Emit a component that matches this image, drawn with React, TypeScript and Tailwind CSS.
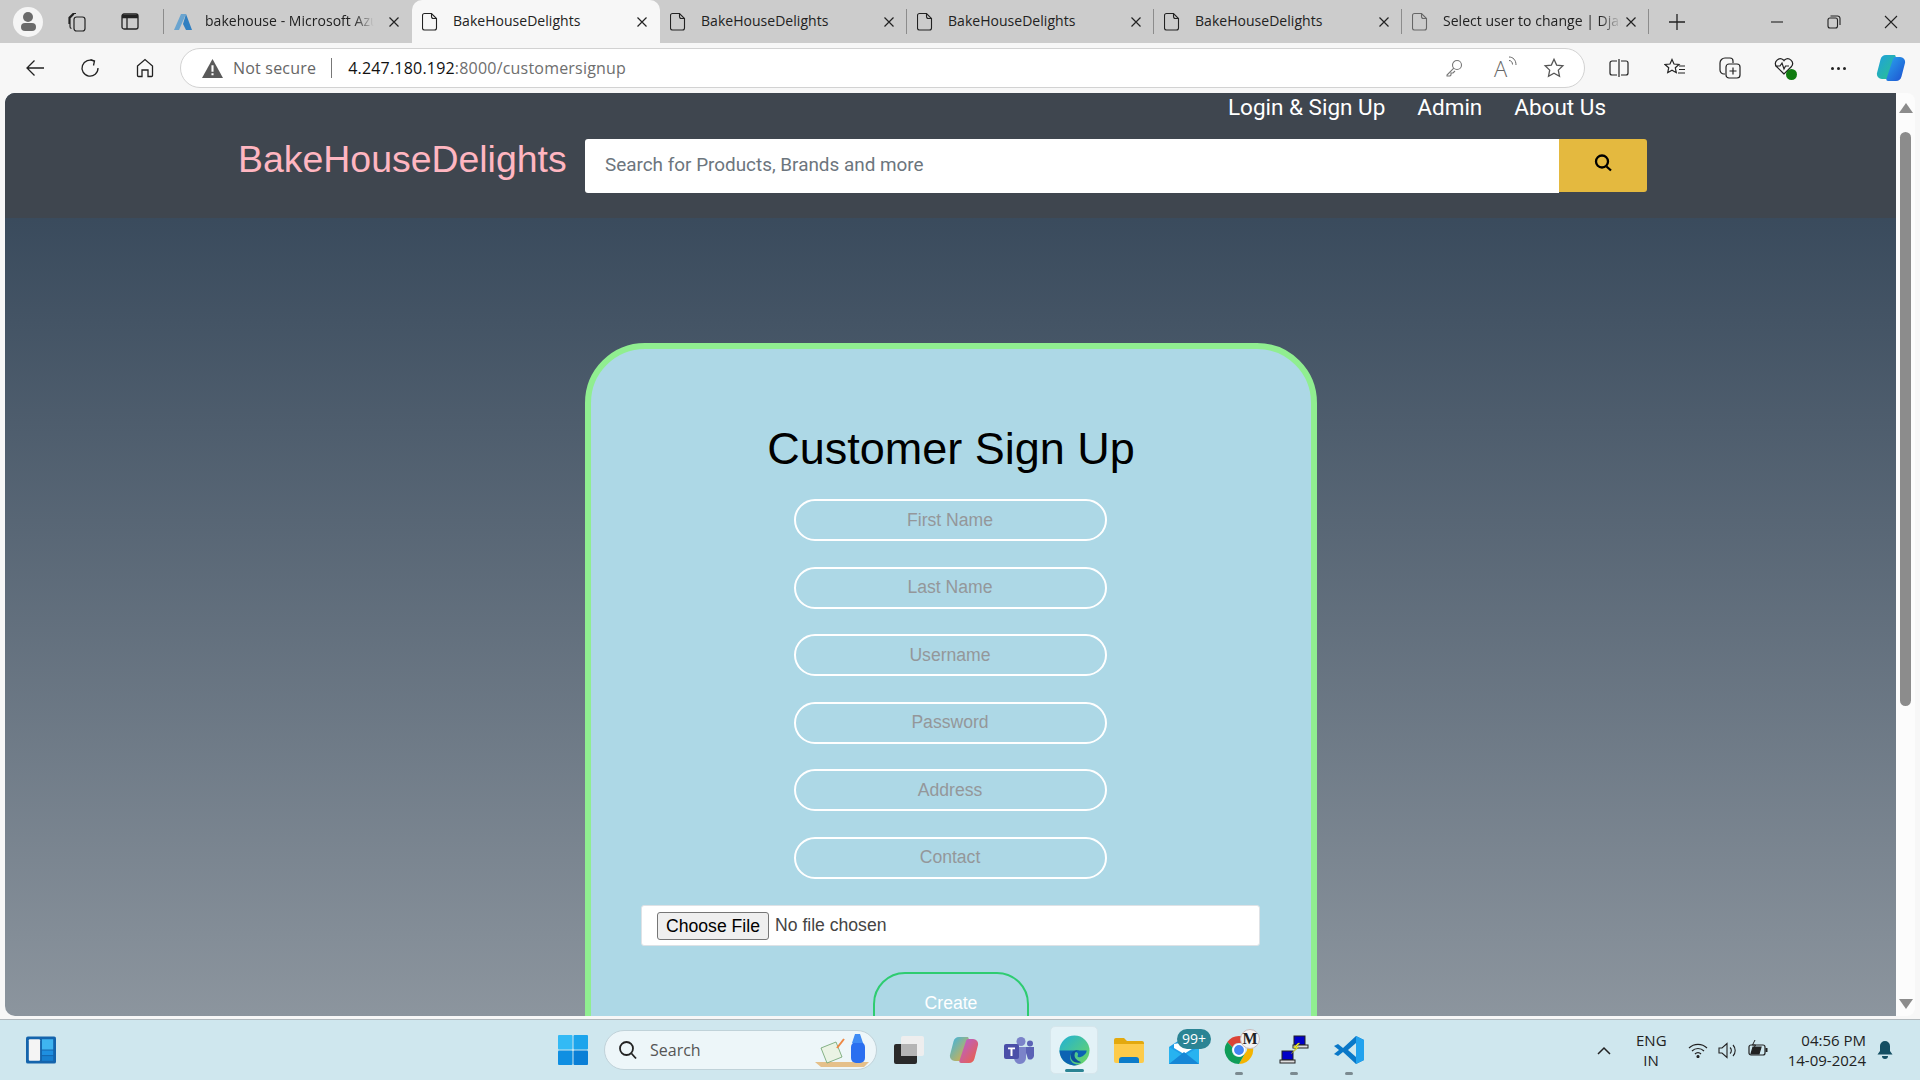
import React from "react";

const TabX = ({ cls }: { cls: string }) => (
  <svg width="12" height="12" viewBox="0 0 12 12" className={cls} stroke="#222" strokeWidth="1.2"><path d="M1.500 1.500l9 9M10.500 1.500l-9 9" /></svg>
);

const Tab = ({ title, w, active, faded, sep }: { title: string; w: string; active?: boolean; faded?: boolean; sep?: boolean }) => (
  <div className={`${w} relative flex items-center h-[43px] shrink-0 ${active ? "bg-[#f7f7f7] rounded-t-[10px]" : ""}`}>
    <svg width="16" height="20" viewBox="0 0 16 20" className="ml-[10px] shrink-0" fill="none" stroke={faded ? "#666" : "#222"} strokeWidth="1.1">
      <path d="M2.500 1.500h7l5 5V16a2 2 0 0 1-2 2h-10a2 2 0 0 1-2-2V3.500a2 2 0 0 1 2-2z" />
      <path d="M9.500 1.500v3a2 2 0 0 0 2 2h3" />
    </svg>
    <span className={`ml-[15px] pb-[2px] text-[14px] text-[#222] whitespace-nowrap overflow-hidden flex-1 font-['Open_Sans',sans-serif] tracking-[0.03px] ${faded ? "[mask-image:linear-gradient(to_right,black_88%,transparent)]" : ""}`}>{title}</span>
    <TabX cls="mr-[12px] ml-1 shrink-0" />
    {sep && <div className="absolute right-0 top-[9px] h-[25px] w-px bg-[#8c8c8c]" />}
  </div>
);

const Field = ({ placeholder }: { placeholder: string }) => (
  <input
    placeholder={placeholder}
    className="block w-[313px] h-[42px] shrink-0 rounded-[21px] border-2 border-white bg-transparent text-center text-[17.600px] font-['Liberation_Sans',sans-serif] placeholder:text-[#94979a] outline-none"
  />
);

const Dot = () => <div className="absolute left-[11px] bottom-[-10px] w-[8px] h-[3px] rounded-[2px] bg-[#7b8a90]" />;

export default function App() {
  return (
    <div className="w-[1920px] h-[1080px] overflow-hidden flex flex-col bg-[#f7f7f7] font-['Liberation_Sans',sans-serif]">
      {/* tab strip */}
      <div className="h-[43px] shrink-0 bg-[#cccccc] flex items-center">
        <div className="w-[164px] shrink-0 flex items-center relative h-full">
          <div className="ml-[13px] w-[30px] h-[30px] rounded-full bg-[#f5f5f5] flex flex-col items-center justify-center gap-[1px]">
            <div className="w-[10px] h-[10px] rounded-full bg-[#6b6b6b]" />
            <div className="w-[15px] h-[8px] rounded-[4px] bg-[#6b6b6b]" />
          </div>
          <svg width="22" height="22" viewBox="0 0 22 22" className="ml-[23px]" fill="none" stroke="#222" strokeWidth="1.2">
            <rect x="8" y="6" width="11" height="14" rx="2.500" />
            <path d="M5.500 17.500A2 2 0 0 1 4 15.500V7l4-4M3 13V6.500L7 2.500h3" />
          </svg>
          <svg width="18" height="17" viewBox="0 0 18 17" className="ml-[33px]" fill="none" stroke="#222" strokeWidth="1.3">
            <rect x="1" y="1" width="16" height="15" rx="2" />
            <path d="M1 3.500h16" strokeWidth="3.500" />
            <path d="M6 5v11" />
          </svg>
          <div className="absolute right-0 top-[9px] h-[25px] w-px bg-[#8c8c8c]" />
        </div>
        <div className="w-[248px] shrink-0 flex items-center h-full">
          <svg width="18" height="18" viewBox="0 0 18 18" className="ml-[10px] shrink-0">
            <path d="M7 1h5l-7 16H0z" fill="#6aa4cf" />
            <path d="M12 1l6 16h-6l-3-6z" fill="#2f7fc1" />
          </svg>
          <span className="ml-[13px] pb-[2px] text-[14px] text-[#222] whitespace-nowrap overflow-hidden flex-1 font-['Open_Sans',sans-serif] tracking-[0.03px] [mask-image:linear-gradient(to_right,black_88%,transparent)]">bakehouse - Microsoft Azure</span>
          <TabX cls="mr-[12px] ml-[14px] shrink-0" />
        </div>
        <Tab title="BakeHouseDelights" w="w-[248px]" active />
        <Tab title="BakeHouseDelights" w="w-[247px]" sep />
        <Tab title="BakeHouseDelights" w="w-[247px]" sep />
        <Tab title="BakeHouseDelights" w="w-[248px]" sep />
        <Tab title="Select user to change | Django" w="w-[247px]" faded sep />
        <svg width="18" height="18" viewBox="0 0 18 18" className="ml-[19px]" stroke="#222" strokeWidth="1.3"><path d="M9 1v16M1 9h16" /></svg>
        <div className="ml-auto flex items-center">
          <svg width="14" height="14" viewBox="0 0 14 14" stroke="#222" strokeWidth="1.1"><path d="M1 7h12" /></svg>
          <svg width="14" height="14" viewBox="0 0 14 14" className="ml-[43px]" fill="none" stroke="#222" strokeWidth="1.1"><rect x="1" y="3" width="9.500" height="10" rx="2" /><path d="M3.500 1h7a2.500 2.500 0 0 1 2.500 2.500V10" /></svg>
          <svg width="14" height="14" viewBox="0 0 14 14" className="ml-[43px] mr-[22px]" stroke="#222" strokeWidth="1.1"><path d="M1 1l12 12M13 1L1 13" /></svg>
        </div>
      </div>

      {/* toolbar */}
      <div className="h-[50px] shrink-0 flex items-center bg-[#f7f7f7]">
        <svg width="20" height="20" viewBox="0 0 20 20" className="ml-[25px]" fill="none" stroke="#222" strokeWidth="1.3"><path d="M19 10H2M9.500 2.500L2 10l7.500 7.500" /></svg>
        <svg width="20" height="20" viewBox="0 0 20 20" className="ml-[35px]" fill="none" stroke="#222" strokeWidth="1.3"><path d="M14 3.200A8 8 0 1 0 18 10" /><path d="M10.500 1.500L14.500 3l-1 4.500" /></svg>
        <svg width="20" height="20" viewBox="0 0 20 20" className="ml-[35px]" fill="none" stroke="#222" strokeWidth="1.3"><path d="M2.500 8L10 1.500 17.500 8v9.500a1 1 0 0 1-1 1H13V12H7v6.500H3.500a1 1 0 0 1-1-1z" /></svg>
        <div className="ml-[25px] w-[1405px] h-[40px] rounded-[20px] bg-white border border-[#d2d2d2] flex items-center">
          <svg width="21" height="19" viewBox="0 0 20 18" className="ml-[21px]"><path d="M10 0L20 18H0z" fill="#5a5a5a" /><path d="M9 6h2v6H9zM9 13.500h2v2H9z" fill="#fff" /></svg>
          <span className="ml-[10px] text-[16px] text-[#666] font-['Open_Sans',sans-serif] tracking-[0.2px]">Not secure</span>
          <div className="ml-[15px] w-px h-[20px] bg-[#777]" />
          <span className="ml-[16px] text-[16px] text-[#111] font-['Open_Sans',sans-serif] tracking-[0.2px]">4.247.180.192<span className="text-[#6e6e6e]">:8000/customersignup</span></span>
          <svg width="18" height="18" viewBox="0 0 18 18" className="ml-auto mr-[1px]" fill="none" stroke="#777" strokeWidth="1.1"><circle cx="12" cy="6" r="4.500" /><path d="M8.800 9.200L2 16v1h3l1-1v-2h2l2-2" /></svg>
          <span className="ml-[30px] relative w-[20px] h-[22px] text-[22px] leading-[22px] text-[#666] font-light font-['Open_Sans',sans-serif]">A<svg width="9" height="11" viewBox="0 0 9 11" className="absolute right-[-3px] top-[-1px]" fill="none" stroke="#666"><path d="M1 1c4 0 7 3 7 8M1 4.500c2 0 3.500 1.500 3.500 4" /></svg></span>
          <svg width="22" height="22" viewBox="0 0 24 24" className="ml-[29px] mr-[19px]" fill="none" stroke="#555" strokeWidth="1.4"><path d="M12 2.500l2.900 6.300 6.800.8-5 4.700 1.300 6.800-6-3.400-6 3.400 1.300-6.800-5-4.700 6.800-.8z" /></svg>
        </div>
        <svg width="20" height="20" viewBox="0 0 20 20" className="ml-[24px]" fill="none" stroke="#222" strokeWidth="1.2"><path d="M8 3H3a2 2 0 0 0-2 2v10a2 2 0 0 0 2 2h5M12 3h5a2 2 0 0 1 2 2v10a2 2 0 0 1-2 2h-5M10 1v18" /></svg>
        <svg width="22" height="20" viewBox="0 0 22 20" className="ml-[35px]" fill="none" stroke="#222" strokeWidth="1.2"><path d="M8 1.500l2 4.500 5 .5-3.700 3.300 1 4.900L8 12.300l-4.300 2.400 1-4.900L1 6.500l5-.5z" /><path d="M15 8h6M15 11.500h6M14 15h7" /></svg>
        <svg width="22" height="22" viewBox="0 0 22 22" className="ml-[33px]" fill="none" stroke="#222" strokeWidth="1.2"><path d="M6 17H5a4 4 0 0 1-4-4V6a5 5 0 0 1 5-5h5a3 3 0 0 1 3 3v2" /><rect x="7" y="7" width="14" height="14" rx="3" /><path d="M14 10.500v7M10.500 14h7" /></svg>
        <div className="ml-[33px] relative w-[22px] h-[22px]">
          <svg width="20" height="18" viewBox="0 0 20 18" fill="none" stroke="#222" strokeWidth="1.2"><path d="M10 17L2.500 9.500A4.800 4.800 0 0 1 9.500 3L10 3.700l.5-.7a4.800 4.800 0 0 1 7 6.500L10 17zM1 9h5l2-3 2 6 1.500-3H15" /></svg>
          <div className="absolute right-[-1px] bottom-[-1px] w-[11px] h-[11px] rounded-full bg-[#107c10]" />
        </div>
        <div className="ml-[35px] flex gap-[3px]">
          <div className="w-[3px] h-[3px] rounded-full bg-[#222]" />
          <div className="w-[3px] h-[3px] rounded-full bg-[#222]" />
          <div className="w-[3px] h-[3px] rounded-full bg-[#222]" />
        </div>
        <svg width="30" height="28" viewBox="0 0 30 28" className="ml-[30px]">
          <defs>
            <linearGradient id="cp1" x1="0" y1="0" x2="1" y2="1"><stop offset="0" stopColor="#1f9fe0" /><stop offset="1" stopColor="#2bc48a" /></linearGradient>
            <linearGradient id="cp2" x1="0" y1="0" x2="1" y2="1"><stop offset="0" stopColor="#2aa6ee" /><stop offset="1" stopColor="#1d4fd0" /></linearGradient>
          </defs>
          <path d="M10 1h8c1.500 0 2 1 1.500 2.500L13 23c-.5 1.500-1.500 2-3 2H6a5 5 0 0 1-5-6l3.500-13.500A6 6 0 0 1 10 1z" fill="url(#cp1)" />
          <path d="M20 27h-8c-1.500 0-2-1-1.500-2.500L17 5c.5-1.500 1.500-2 3-2h4a5 5 0 0 1 5 6l-3.500 13.500A6 6 0 0 1 20 27z" fill="url(#cp2)" />
        </svg>
      </div>

      {/* page viewport */}
      <div className="h-[923px] shrink-0 flex ml-[5px] rounded-l-[10px] overflow-hidden">
        <div className="w-[1891px] shrink-0 h-full overflow-hidden bg-gradient-to-b from-[#2e4053] to-[#8c959e]">
          <div className="h-[125px] bg-[#3f464f] flex flex-col">
            <div className="h-[28px] mt-[1px] flex justify-end items-center pr-[290px] gap-[32px] text-[22.500px] text-white font-['Roboto',sans-serif]">
              <span>Login &amp; Sign Up</span>
              <span>Admin</span>
              <span>About Us</span>
            </div>
            <div className="flex items-start mt-[17px]">
              <div className="ml-[233px] w-[347px] text-[37.440px] leading-[44px] text-[#ffb6c1] font-['Liberation_Sans',sans-serif] whitespace-nowrap mt-[-2px]">BakeHouseDelights</div>
              <div className="w-[974px] h-[54px] bg-white rounded-l-[3px] flex items-center pb-[1px]">
                <span className="ml-[20px] text-[18.900px] text-[#6c757d] font-['Roboto',sans-serif]">Search for Products, Brands and more</span>
              </div>
              <div className="w-[88px] h-[53px] bg-[#e4b93f] rounded-r-[3px] flex items-center justify-center pb-[6px]">
                <svg width="18" height="18" viewBox="0 0 18 18" fill="none" stroke="#000" strokeWidth="2.300"><circle cx="8" cy="7.500" r="6" /><path d="M12.500 12.500L17 16.500" /></svg>
              </div>
            </div>
          </div>
          <div className="w-[732px] ml-[580px] mt-[125px] h-[800px] rounded-[60px] border-[6px] border-[#90ee90] bg-[#add8e6] flex flex-col items-center">
            <h1 className="mt-[75px] text-[45px] leading-[50px] text-black font-['Liberation_Sans',sans-serif]">Customer Sign Up</h1>
            <div className="mt-[25px] mr-[2px] flex flex-col gap-[25.500px]">
              <Field placeholder="First Name" />
              <Field placeholder="Last Name" />
              <Field placeholder="Username" />
              <Field placeholder="Password" />
              <Field placeholder="Address" />
              <Field placeholder="Contact" />
            </div>
            <div className="mt-[26px] mr-[1px] w-[619px] h-[41px] shrink-0 bg-white rounded-[3px] border border-[#dee2e6] flex items-center">
              <button className="ml-[15px] w-[112px] h-[28px] mt-[1px] bg-[#efefef] border border-[#767676] rounded-[3px] text-[17.600px] leading-[26px] text-black">Choose File</button>
              <span className="ml-[6px] mt-[1px] text-[17.600px] text-[#444]">No file chosen</span>
            </div>
            <button className="mt-[26px] w-[156px] h-[75px] shrink-0 rounded-[32px] border-2 border-[#2ecc71] text-white text-[17.600px] leading-[20px] pb-[12px]">Create</button>
          </div>
        </div>
        {/* scrollbar */}
        <div className="w-[19px] shrink-0 bg-[#fcfcfc] rounded-r-[8px] flex flex-col items-center relative">
          <svg width="14" height="10" viewBox="0 0 14 10" className="mt-[10px]"><path d="M7 0l7 10H0z" fill="#8c8c8c" /></svg>
          <div className="mt-[19px] w-[11px] h-[574px] rounded-[6px] bg-[#8c8c8c]" />
          <svg width="14" height="10" viewBox="0 0 14 10" className="absolute bottom-[7px]"><path d="M7 10L14 0H0z" fill="#8c8c8c" /></svg>
        </div>
      </div>

      {/* gap under page */}
      <div className="h-[4px] shrink-0 bg-[#f7f7f7] border-b border-[#b0b8bc]" />

      {/* taskbar */}
      <div className="h-[60px] flex-1 bg-[#cfe7ee] flex items-center relative font-['Open_Sans',sans-serif]">
        <svg width="30" height="28" viewBox="0 0 32 29" className="ml-[26px] shrink-0">
          <rect width="32" height="29" rx="2" fill="#1464ac" />
          <rect x="3" y="3" width="12" height="23" rx="1" fill="#f4f4f4" />
          <rect x="17" y="3" width="12" height="11" fill="#3fb4f0" />
          <rect x="17" y="15" width="12" height="5" fill="#1e8fe0" />
          <rect x="17" y="21" width="12" height="5" fill="#1780d0" />
        </svg>
        <svg width="30" height="30" viewBox="0 0 30 30" className="ml-[502px] shrink-0">
          <rect width="14.500" height="14.500" fill="#33baf5" rx="1" />
          <rect x="15.500" width="14.500" height="14.500" fill="#1ca5ec" rx="1" />
          <rect y="15.500" width="14.500" height="14.500" fill="#0f8fe2" rx="1" />
          <rect x="15.500" y="15.500" width="14.500" height="14.500" fill="#0a7fd6" rx="1" />
        </svg>
        <div className="ml-[16px] w-[273px] h-[40px] shrink-0 rounded-[20px] bg-[#edf6f9] border border-[#c0d2d9] flex items-center relative">
          <svg width="20" height="20" viewBox="0 0 20 20" className="ml-[13px]" fill="none" stroke="#222" strokeWidth="1.800"><circle cx="8.500" cy="8.500" r="6.500" /><path d="M13.500 13.500L18 18.500" /></svg>
          <span className="ml-[12px] text-[16px] text-[#555]">Search</span>
          <svg width="58" height="36" viewBox="0 0 58 36" className="absolute right-[5px] top-[1px]">
            <path d="M2 30h54l-5 5H8z" fill="#e5c08a" />
            <path d="M8 16l15-6 6 15-15 6z" fill="#eaf3e4" stroke="#6aa06a" strokeWidth=".8" />
            <path d="M24 16l7-9" stroke="#ee8844" strokeWidth="2" />
            <rect x="38" y="10" width="14" height="21" rx="5" fill="#2a6ff0" />
            <path d="M42 2h5l3 9H39z" fill="#3f8cf5" />
          </svg>
        </div>
        <div className="ml-[17px] relative w-[30px] h-[28px] shrink-0">
          <div className="absolute left-[7px] top-0 w-[23px] h-[20px] rounded-[2px] bg-[#eeeeee]" />
          <div className="absolute left-0 bottom-0 w-[23px] h-[20px] rounded-[2px] bg-[#2a2a2a]" />
          <div className="absolute left-[7px] top-[8px] w-[16px] h-[12px] bg-[#b5b5b5]" />
        </div>
        <svg width="30" height="28" viewBox="0 0 30 28" className="ml-[25px] shrink-0">
          <defs>
            <linearGradient id="tc1" x1="0" y1="0" x2="1" y2="1"><stop offset="0" stopColor="#35b5e8" /><stop offset="1" stopColor="#f0b030" /></linearGradient>
            <linearGradient id="tc2" x1="0" y1="0" x2="1" y2="1"><stop offset="0" stopColor="#b060e0" /><stop offset="1" stopColor="#f0603a" /></linearGradient>
          </defs>
          <path d="M10 1h8c1.500 0 2 1 1.500 2.500L13 23c-.5 1.500-1.500 2-3 2H6a5 5 0 0 1-5-6l3.500-13.500A6 6 0 0 1 10 1z" fill="url(#tc1)" />
          <path d="M20 27h-8c-1.500 0-2-1-1.500-2.500L17 5c.5-1.500 1.500-2 3-2h4a5 5 0 0 1 5 6l-3.500 13.500A6 6 0 0 1 20 27z" fill="url(#tc2)" />
        </svg>
        <svg width="30" height="28" viewBox="0 0 30 28" className="ml-[25px] shrink-0">
          <circle cx="17" cy="5.500" r="4.500" fill="#7b83c9" />
          <circle cx="26" cy="7.500" r="3" fill="#5b62b5" />
          <path d="M20 11h10v9a4 4 0 0 1-6 3z" fill="#5b62b5" />
          <path d="M9 11h13v11a6 6 0 0 1-12 0z" fill="#7b83c9" />
          <rect y="8" width="15" height="15" rx="2" fill="#4a4fa8" />
          <path d="M4 11.500h7v1.800H8.500V20h-2v-6.700H4z" fill="#fff" />
        </svg>
        <div className="ml-[16px] relative w-[48px] h-[48px] shrink-0 rounded-[5px] bg-[#e3f2f7] border border-[#d6e6ec] flex items-center justify-center">
          <svg width="31" height="31" viewBox="0 0 32 32">
            <defs>
              <linearGradient id="ed1" x1="0" y1="0" x2="1" y2="1"><stop offset="0" stopColor="#1fb0d8" /><stop offset="1" stopColor="#6fd85c" /></linearGradient>
            </defs>
            <circle cx="16" cy="16" r="15.500" fill="url(#ed1)" />
            <path d="M0.500 16a15.500 15.500 0 0 0 22 14c-5 2-12-2-11-8 1-4 6-6 8-3 1 2-2 3 1 4 3 0 8-3 8-7H10c-5 0-9 0-9.500 0z" fill="#0c63b3" />
            <path d="M12 22c0-5 5-7 9-6-3 0-5 2-5 5 0 3 3 6 7 7-5 2-11-1-11-6z" fill="#0a4f9a" />
          </svg>
          <div className="absolute bottom-[1px] left-[14px] w-[19px] h-[3px] rounded-[2px] bg-[#2b8494]" />
        </div>
        <svg width="30" height="26" viewBox="0 0 30 26" className="ml-[16px] shrink-0">
          <path d="M0 3a2 2 0 0 1 2-2h8l3 3h15a2 2 0 0 1 2 2v4H0z" fill="#e3a90e" />
          <path d="M0 7h30v17a2 2 0 0 1-2 2H2a2 2 0 0 1-2-2z" fill="#fdcb4a" />
          <path d="M5 26v-3a3 3 0 0 1 3-3h14a3 3 0 0 1 3 3v3z" fill="#0c7cc9" />
        </svg>
        <div className="ml-[25px] relative w-[30px] h-[27px] shrink-0">
          <svg width="30" height="27" viewBox="0 0 30 27">
            <path d="M0 10L15 0l15 10v17H0z" fill="#1e9fe8" />
            <path d="M5 7l18-3 3 6-11 7-10-6z" fill="#fff" />
            <path d="M0 10l15 9 15-9v17H0z" fill="#27b3f0" />
            <path d="M0 27l15-12 15 12z" fill="#1687d6" />
          </svg>
          <div className="absolute left-[8px] top-[-8px] w-[34px] h-[20px] rounded-[10px] bg-[#2b8494] text-white text-[14px] leading-[20px] text-center">99+</div>
        </div>
        <div className="ml-[25px] relative w-[30px] h-[30px] shrink-0">
          <svg width="30" height="30" viewBox="0 0 32 32">
            <path d="M16 1a15 15 0 0 1 13 7.500H16a7.500 7.500 0 0 0-7 4.500L3.500 7.500A15 15 0 0 1 16 1z" fill="#db4437" />
            <path d="M29 8.500A15 15 0 0 1 16 31l6.500-11.500a7.500 7.500 0 0 0 0-11z" fill="#f4b400" />
            <path d="M16 31A15 15 0 0 1 3.500 7.500L9 13a7.500 7.500 0 0 0 13.500 6.500z" fill="#0f9d58" />
            <circle cx="16" cy="16" r="6" fill="#4285f4" stroke="#fff" strokeWidth="1.500" />
          </svg>
          <div className="absolute right-[-6px] top-[-6px] w-[20px] h-[20px] rounded-full bg-[#f2f2f2] border border-[#c9b8b8] text-[16px] leading-[18px] text-center font-bold text-[#222] font-['Liberation_Serif',serif]">M</div>
          <Dot />
        </div>
        <div className="ml-[25px] relative w-[30px] h-[30px] shrink-0">
          <svg width="30" height="30" viewBox="0 0 30 30">
            <rect x="15" y="1" width="11" height="9" fill="#0000c8" stroke="#222" />
            <rect x="14" y="10" width="15" height="3" fill="#ddd" stroke="#222" />
            <rect x="3" y="16" width="11" height="9" fill="#0000c8" stroke="#222" />
            <rect x="1" y="25" width="15" height="3" fill="#ddd" stroke="#222" />
            <path d="M19 8l-5 5h3l-5 6 8-7h-3l4-4z" fill="#f5ee1c" stroke="#8a8a20" strokeWidth=".4" />
          </svg>
          <Dot />
        </div>
        <div className="ml-[25px] relative w-[30px] h-[30px] shrink-0">
          <svg width="30" height="30" viewBox="0 0 30 30">
            <path d="M22 1l8 4v20l-8 4L9 17l-5 4-4-2 5-4-5-4 4-2 5 4z" fill="#0a78c8" />
            <path d="M22 8v14l-8-7z" fill="#cfe7ee" />
            <path d="M22 1l8 4v20l-8 4z" fill="#22a2ee" />
          </svg>
          <Dot />
        </div>

        {/* tray */}
        <svg width="14" height="9" viewBox="0 0 14 9" className="absolute left-[1597px] top-[26px]" fill="none" stroke="#222" strokeWidth="1.500"><path d="M1 8l6-6 6 6" /></svg>
        <div className="absolute left-[1636px] top-[10px] w-[30px] text-center text-[15px] leading-[20px] text-[#222]">ENG<br />IN</div>
        <svg width="20" height="15" viewBox="0 0 20 15" className="absolute left-[1688px] top-[23px]" fill="none" stroke="#222" strokeWidth="1.200"><path d="M1 5a13 13 0 0 1 18 0M4 8a8.500 8.500 0 0 1 12 0M7 11a4 4 0 0 1 6 0" /><circle cx="10" cy="13.500" r="1" fill="#222" /></svg>
        <svg width="20" height="17" viewBox="0 0 20 17" className="absolute left-[1718px] top-[22px]" fill="none" stroke="#222" strokeWidth="1.100"><path d="M1 6h3l5-4.500v14L4 11H1z" /><path d="M12 5.500a4 4 0 0 1 0 6M15 3a8 8 0 0 1 0 11" /></svg>
        <svg width="20" height="17" viewBox="0 0 20 17" className="absolute left-[1748px] top-[20px]" fill="none" stroke="#222" strokeWidth="1.200"><rect x="1" y="5" width="16" height="10" rx="2" /><path d="M18.500 8v4" strokeWidth="2" /><path d="M3 14h8l2-7H5z" fill="#222" /><path d="M7 0L4.500 5h3L6 8" stroke="#222" strokeWidth="1" /></svg>
        <div className="absolute left-[1760px] top-[10px] w-[106px] text-right text-[15px] leading-[20px] text-[#222]">04:56 PM<br />14-09-2024</div>
        <svg width="16" height="20" viewBox="0 0 16 20" className="absolute left-[1877px] top-[20px]"><path d="M8 1a5 5 0 0 1 5 5v5l2.500 3.500H.5L3 11V6a5 5 0 0 1 5-5z" fill="#144f63" /><path d="M5 16h6a3 3 0 0 1-6 0z" fill="#144f63" /></svg>
      </div>
    </div>
  );
}
